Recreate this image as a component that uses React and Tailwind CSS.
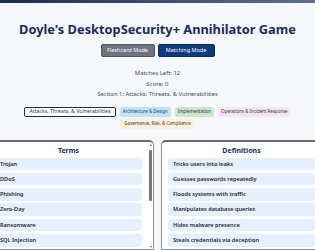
import React from "react";

const terms = ["Trojan", "DDoS", "Phishing", "Zero-Day", "Ransomware", "SQL Injection"];
const definitions = [
  "Tricks users into leaks",
  "Guesses passwords repeatedly",
  "Floods systems with traffic",
  "Manipulates database queries",
  "Hides malware presence",
  "Steals credentials via deception",
];

const sections = [
  { name: "Attacks, Threats, & Vulnerabilities", cls: "bg-white border-[#1c2f5e] border-[1.5px] px-[4px] text-[5.2px]" },
  { name: "Architecture & Design", cls: "bg-[#bfe3fb] border-[#bfe3fb] border px-[2px] text-[4.4px]" },
  { name: "Implementation", cls: "bg-[#cbe7cb] border-[#cbe7cb] border px-[2px] text-[4.4px]" },
  { name: "Operations & Incident Response", cls: "bg-[#f8e3f4] border-[#f8e3f4] border px-[2px] text-[4.4px]" },
  { name: "Governance, Risk, & Compliance", cls: "bg-[#fdf0da] border-[#fdf0da] border px-[3px] text-[4.4px]" },
];

function Scrollbar() {
  return (
    <div className="w-[3px] mr-[1px] flex flex-col items-center">
      <div className="mt-[2px] w-0 h-0 border-l-[1.5px] border-r-[1.5px] border-b-[2px] border-l-transparent border-r-transparent border-b-[#666]" />
      <div className="mt-[4px] w-[2.5px] h-[51px] bg-[#7a7a7a] rounded-[1px]" />
      <div className="flex-1" />
      <div className="mb-[1px] w-0 h-0 border-l-[1.5px] border-r-[1.5px] border-t-[2px] border-l-transparent border-r-transparent border-t-[#666]" />
    </div>
  );
}

function Panel({ title, items }) {
  return (
    <div className="h-[110px] bg-white border border-[#8c8c8c] border-t-[#6a6a6a] border-t-2 rounded-t-[5px] flex">
      <div className="flex-1 pl-[6px] pr-[7px] overflow-hidden">
        <div className="text-center text-[7px] font-bold text-[#1c2b5a] pt-[4px] h-[16px]">{title}</div>
        <div className="flex flex-col gap-[2.6px]">
          {items.map((item) => (
            <div key={item} className="h-[12.7px] flex items-center px-[5px] rounded-[3px] bg-[#e4f0fd] text-[5.6px] font-semibold text-[#1e2433] whitespace-nowrap">
              {item}
            </div>
          ))}
        </div>
      </div>
      <Scrollbar />
    </div>
  );
}

export default function App() {
  return (
    <div className="h-screen overflow-hidden bg-[#f6f7fa] font-['Noto_Sans',sans-serif]">
      <div className="h-[3px] bg-gradient-to-r from-[#1a2a52] via-[#3b4d78] to-[#5d6f96]" />
      <div className="flex flex-col items-center">
        <h1 className="mt-[18px] text-[12.8px] leading-[17px] font-bold text-[#1c2b5a]">
          Doyle's DesktopSecurity+ Annihilator Game
        </h1>
        <div className="mt-[6px] flex gap-[3px]">
          <button className="w-[54px] h-[13px] rounded-[2px] bg-[#6c757d] border border-[#4f565c] text-white text-[5.5px]">
            Flashcard Mode
          </button>
          <button className="w-[57px] h-[13px] rounded-[2px] bg-[#0d3b7e] border border-[#0a2c5e] text-white text-[5.5px]">
            Matching Mode
          </button>
        </div>
        <div className="mt-[11px] text-[5.9px] leading-[10.5px] text-[#3d4b68] text-center">
          <div>Matches Left: 12</div>
          <div>Score: 0</div>
          <div>Section 1: Attacks, Threats, &amp; Vulnerabilities</div>
        </div>
        <div className="mt-[7px] w-[300px] flex flex-wrap justify-center items-center gap-x-[4px] gap-y-[2px]">
          {sections.map((s) => (
            <div key={s.name} className={"h-[10px] flex items-center rounded-[2px] text-[#333a45] " + s.cls}>
              {s.name}
            </div>
          ))}
        </div>
        <div className="mt-[11px] shrink-0 grid grid-cols-[166px_166px] gap-[7px]">
          <Panel title="Terms" items={terms} />
          <Panel title="Definitions" items={definitions} />
        </div>
      </div>
    </div>
  );
}
